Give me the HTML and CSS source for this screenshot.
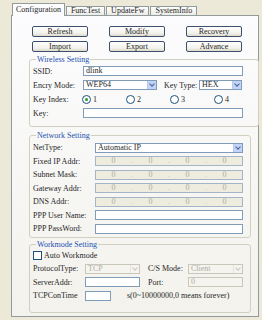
FILE: index.html
```html
<!DOCTYPE html>
<html lang="en">
<head>
    <meta charset="UTF-8">
    <title>Configuration</title>
    <link rel="stylesheet" href="styles.css">
</head>
<body>
    <div class="tabs">
        <div class="tabbar">
            <div class="tab active">Configuration</div>
            <div class="tab">FuncTest</div>
            <div class="tab">UpdateFw</div>
            <div class="tab">SystemInfo</div>
        </div>

        <div class="panel">
            <!-- Buttons -->
            <div class="buttons">
                <button class="btn">Refresh</button>
                <button class="btn">Modify</button>
                <button class="btn">Recovery</button>
                <button class="btn">Import</button>
                <button class="btn">Export</button>
                <button class="btn">Advance</button>
            </div>

            <!-- Wireless -->
            <fieldset class="group wireless">
                <legend>Wireless Setting</legend>
                <div class="row">
                    <span class="lbl">SSID:</span>
                    <div class="input w-full">dlink</div>
                </div>
                <div class="row">
                    <span class="lbl">Encry Mode:</span>
                    <div class="select w-encry"><span>WEP64</span><i class="arrow"></i></div>
                    <span class="lbl2">Key Type:</span>
                    <div class="select w-hex"><span>HEX</span><i class="arrow"></i></div>
                </div>
                <div class="row">
                    <span class="lbl">Key Index:</span>
                    <div class="radios">
                        <label class="radio"><i class="dot checked"></i>1</label>
                        <label class="radio"><i class="dot"></i>2</label>
                        <label class="radio"><i class="dot"></i>3</label>
                        <label class="radio"><i class="dot"></i>4</label>
                    </div>
                </div>
                <div class="row">
                    <span class="lbl">Key:</span>
                    <div class="input w-full"></div>
                </div>
            </fieldset>

            <!-- Network -->
            <fieldset class="group network">
                <legend>Network Setting</legend>
                <div class="row">
                    <span class="lbl">NetType:</span>
                    <div class="select w-net"><span>Automatic IP</span><i class="arrow"></i></div>
                </div>
                <div class="row">
                    <span class="lbl">Fixed IP Addr:</span>
                    <div class="ip"><span>0</span><b>.</b><span>0</span><b>.</b><span>0</span><b>.</b><span>0</span></div>
                </div>
                <div class="row">
                    <span class="lbl">Subnet Mask:</span>
                    <div class="ip"><span>0</span><b>.</b><span>0</span><b>.</b><span>0</span><b>.</b><span>0</span></div>
                </div>
                <div class="row">
                    <span class="lbl">Gateway Addr:</span>
                    <div class="ip"><span>0</span><b>.</b><span>0</span><b>.</b><span>0</span><b>.</b><span>0</span></div>
                </div>
                <div class="row">
                    <span class="lbl">DNS Addr:</span>
                    <div class="ip"><span>0</span><b>.</b><span>0</span><b>.</b><span>0</span><b>.</b><span>0</span></div>
                </div>
                <div class="row">
                    <span class="lbl">PPP User Name:</span>
                    <div class="input w-net"></div>
                </div>
                <div class="row">
                    <span class="lbl">PPP PassWord:</span>
                    <div class="input w-net"></div>
                </div>
            </fieldset>

            <!-- Workmode -->
            <fieldset class="group workmode">
                <legend>Workmode Setting</legend>
                <div class="row">
                    <label class="check"><i class="box"></i>Auto Workmode</label>
                </div>
                <div class="row">
                    <span class="lbl">ProtocolType:</span>
                    <div class="select disabled w-half"><span>TCP</span><i class="arrow"></i></div>
                    <span class="lbl2">C/S Mode:</span>
                    <div class="select disabled w-half2"><span>Client</span><i class="arrow"></i></div>
                </div>
                <div class="row">
                    <span class="lbl">ServerAddr:</span>
                    <div class="input w-half"></div>
                    <span class="lbl2">Port:</span>
                    <div class="input disabled w-half2">0</div>
                </div>
                <div class="row">
                    <span class="lbl">TCPConTime</span>
                    <div class="input w-time"></div>
                    <span class="note">s(0~10000000,0 means forever)</span>
                </div>
            </fieldset>
        </div>
    </div>
</body>
</html>
```

FILE: styles.css
```css
/* ======= General ======= */
body {
    margin: 0;
    background: #ece9d8;
    font-family: "Liberation Serif", serif;
    font-size: 8px;
    color: #262626;
}

.tabs {
    padding: 3px 0 0 11px;
    width: 248px;
}

/* ======= Tabs ======= */
.tabbar {
    display: flex;
    align-items: flex-end;
    height: 12px;
    padding-left: 1px;
}

.tab {
    height: 8px;
    line-height: 8px;
    padding: 0 4px;
    border: 1px solid #919b9c;
    border-bottom: none;
    background: linear-gradient(#fefefe, #ecebe6);
    margin-right: 1px;
}

.tab.active {
    height: 12px;
    line-height: 12px;
    background: #fcfcfe;
    position: relative;
    margin-bottom: -1px;
    z-index: 1;
    padding: 0 3px;
}

/* ======= Panel ======= */
.panel {
    border: 1px solid #919b9c;
    background: linear-gradient(#fcfcfe, #f3f2ec);
    padding: 10px 7px 0 17px;
    box-sizing: border-box;
    height: 302px;
}

.buttons {
    display: grid;
    grid-template-columns: repeat(3, 56px);
    column-gap: 21px;
    row-gap: 4px;
    padding-left: 3px;
}

.btn {
    height: 11px;
    padding: 0;
    font: inherit;
    color: #262626;
    border: 1px solid #3d5070;
    border-radius: 2px;
    background: linear-gradient(#ffffff, #f2f1ea 70%, #dcd9c8);
    line-height: 9px;
}

/* ======= Group boxes ======= */
.group {
    margin: 0;
    padding: 0 0 0 3px;
    border: 1px solid #d0d0bf;
    border-radius: 3px;
    width: 222px;
    box-sizing: border-box;
}

.group legend {
    color: #2150b0;
    line-height: 9px;
    padding: 0 1px;
    margin-left: 3px;
}

.wireless {
    margin-top: 3px;
    padding-bottom: 6px;
}

.network {
    margin-top: 4px;
    padding-top: 1px;
    padding-bottom: 1px;
}

.workmode {
    margin-top: 2px;
    padding-bottom: 9px;
}

.row {
    display: flex;
    align-items: center;
    height: 14px;
}

.network .row,
.workmode .row {
    height: 13.5px;
}

.lbl {
    width: 50px;
    flex: none;
}

.network .lbl {
    width: 62px;
}

.workmode .lbl {
    width: 52px;
}

.lbl2 {
    margin-left: 7px;
    width: 35px;
    flex: none;
}

.workmode .lbl2 {
    margin-left: 8px;
    width: 40px;
}

/* ======= Inputs ======= */
.input,
.select,
.ip {
    height: 10px;
    box-sizing: border-box;
    border: 1px solid #7f9db9;
    background: #fff;
    line-height: 8px;
    padding-left: 2px;
    flex: none;
}

.select {
    display: flex;
    justify-content: space-between;
    padding-right: 0;
}

.arrow {
    width: 8px;
    height: 8px;
    background: #c1d3fb;
    border-left: 1px solid #b4c8f6;
    position: relative;
}

.arrow::after {
    content: "";
    position: absolute;
    left: 2px;
    top: 1px;
    width: 3px;
    height: 3px;
    border-right: 1px solid #4d6185;
    border-bottom: 1px solid #4d6185;
    transform: rotate(45deg);
}

.select.disabled,
.input.disabled {
    background: #f5f4ef;
    border-color: #c9c7ba;
    color: #b0aea4;
}

.select.disabled .arrow {
    background: #f5f4ef;
    border-left-color: #e5e3d9;
}

.select.disabled .arrow::after {
    border-color: #c9c7ba;
}

.ip {
    display: flex;
    width: 148px;
    background: #eeecdf;
    border-color: #a5b5c8;
    color: #b0ab98;
    padding: 0;
}

.ip span {
    flex: 1;
    text-align: center;
}

.ip b {
    font-weight: normal;
    width: 2px;
    color: #c5c0ab;
}

.w-full { width: 160px; }
.w-encry { width: 74px; }
.w-hex { width: 43px; }
.w-net { width: 148px; }
.w-half { width: 55px; }
.w-half2 { width: 55px; }
.w-time { width: 26px; }

.note {
    margin-left: 16px;
    white-space: nowrap;
}

/* ======= Radios and checkbox ======= */
.radios {
    display: flex;
    margin-left: -1px;
}

.radio {
    display: flex;
    align-items: center;
    width: 44px;
}

.dot {
    width: 7px;
    height: 7px;
    border: 1px solid #1c5180;
    border-radius: 50%;
    background: #fff;
    margin-right: 2px;
    position: relative;
}

.dot.checked::after {
    content: "";
    position: absolute;
    left: 2px;
    top: 2px;
    width: 3px;
    height: 3px;
    border-radius: 50%;
    background: #21a121;
}

.check {
    display: flex;
    align-items: center;
}

.box {
    width: 7px;
    height: 7px;
    border: 1px solid #1c5180;
    background: #fff;
    margin-right: 2px;
}
```
